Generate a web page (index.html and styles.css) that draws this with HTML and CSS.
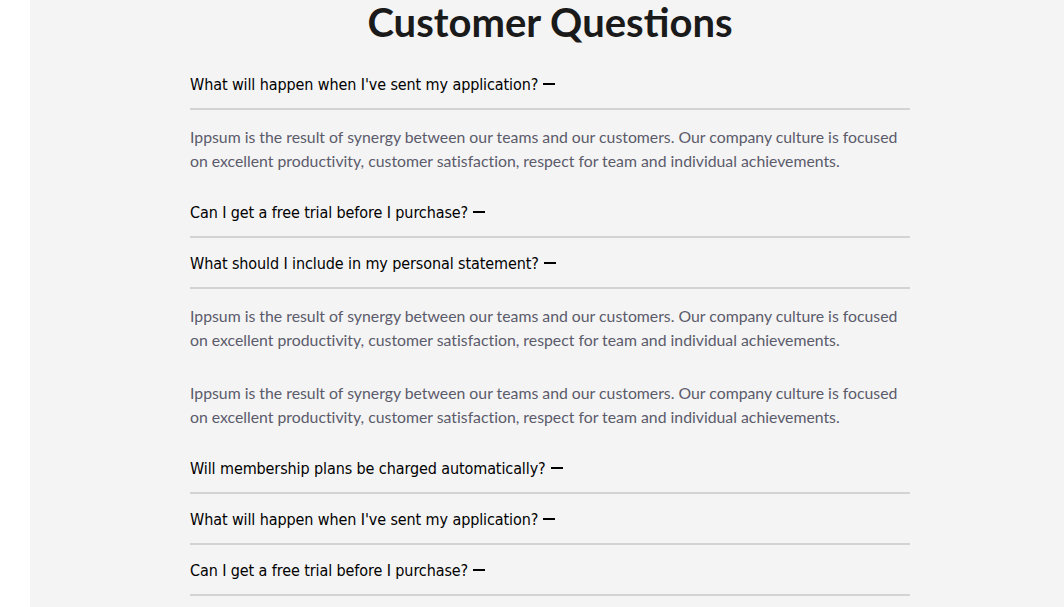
FILE: index.html
```html
<!DOCTYPE html>
<html lang="en">
<head>
<meta charset="utf-8">
<title>Customer Questions</title>
<link rel="stylesheet" href="styles.css">
</head>
<body>
<main class="page">
  <section class="faq">
    <h1 class="faq-title">Customer Questions</h1>
    <div class="faq-item">
      <h3 class="q">What will happen when I've sent my application?<span class="dash"></span></h3>
      <p class="a">Ippsum is the result of synergy between our teams and our customers. Our company culture is focused on excellent productivity, customer satisfaction, respect for team and individual achievements.</p>
    </div>
    <div class="faq-item">
      <h3 class="q">Can I get a free trial before I purchase?<span class="dash"></span></h3>
    </div>
    <div class="faq-item">
      <h3 class="q">What should I include in my personal statement?<span class="dash"></span></h3>
      <p class="a">Ippsum is the result of synergy between our teams and our customers. Our company culture is focused on excellent productivity, customer satisfaction, respect for team and individual achievements.</p>
      <p class="a">Ippsum is the result of synergy between our teams and our customers. Our company culture is focused on excellent productivity, customer satisfaction, respect for team and individual achievements.</p>
    </div>
    <div class="faq-item">
      <h3 class="q">Will membership plans be charged automatically?<span class="dash"></span></h3>
    </div>
    <div class="faq-item">
      <h3 class="q">What will happen when I've sent my application?<span class="dash"></span></h3>
    </div>
    <div class="faq-item">
      <h3 class="q">Can I get a free trial before I purchase?<span class="dash"></span></h3>
    </div>
  </section>
</main>
</body>
</html>
```
FILE: styles.css
```css
html, body {
  margin: 0;
  padding: 0;
  background: #ffffff;
}
body {
  overflow: hidden;
  height: 607px;
}
.page {
  margin-left: 30px;
  background: #f4f4f4;
  min-height: 607px;
  padding: 0 0 40px;
}
.faq {
  width: 720px;
  margin: 0 auto;
  position: relative;
  left: 3px;
}
.faq-title {
  margin: 0 0 15px;
  font-family: Lato, "Liberation Sans", sans-serif;
  font-weight: 700;
  font-size: 40px;
  line-height: 44px;
  color: #1a1a1a;
  text-align: center;
}
.q {
  margin: 0;
  padding: 13px 0 11px;
  font-family: "DejaVu Sans Condensed", "DejaVu Sans", sans-serif;
  font-weight: 400;
  font-size: 16px;
  letter-spacing: -0.1px;
  line-height: 25px;
  color: #000000;
  border-bottom: 2px solid #d3d3d3;
}
.dash {
  display: inline-block;
  width: 12px;
  height: 2px;
  background: #000;
  margin-left: 5px;
  vertical-align: 5px;
}
.a {
  margin: 0;
  padding: 15px 0 14px;
  font-family: Lato, "Liberation Sans", sans-serif;
  font-size: 15.8px;
  line-height: 24px;
  color: #5b5b6b;
  font-variant-ligatures: no-common-ligatures;
}
```
